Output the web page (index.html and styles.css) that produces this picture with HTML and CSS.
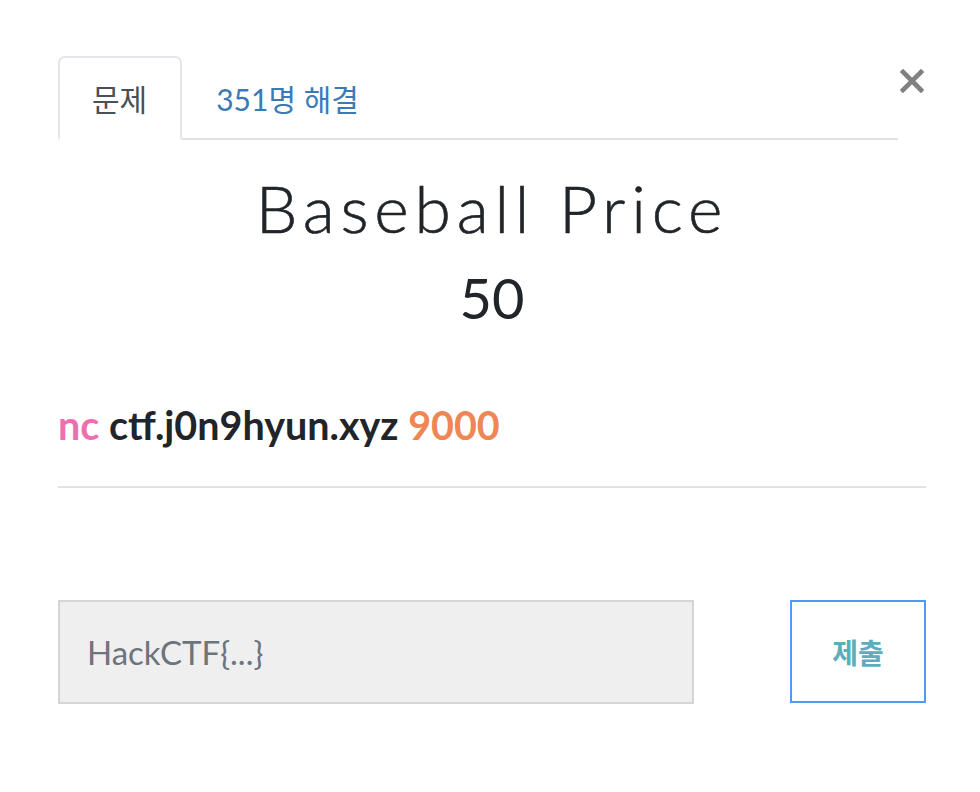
FILE: index.html
```html
<!DOCTYPE html>
<html lang="ko">
<head>
<meta charset="utf-8">
<title>Baseball Price</title>
<link rel="stylesheet" href="styles.css">
</head>
<body>
<div class="modal">
  <div class="header">
    <ul class="tabs">
      <li class="tab active">문제</li>
      <li class="tab link">351명 해결</li>
    </ul>
    <button class="close" aria-label="닫기">
      <svg width="24" height="24" viewBox="0 0 24 24"><path d="M3 3L21 21M21 3L3 21" stroke="#808080" stroke-width="4.6" stroke-linecap="square"/></svg>
    </button>
  </div>
  <h1 class="title">Baseball Price</h1>
  <div class="points">50</div>
  <p class="cmd"><span class="nc">nc</span> ctf.j0n9hyun.xyz <span class="port">9000</span></p>
  <hr class="rule">
  <form class="submit-row">
    <input class="flag" type="text" placeholder="HackCTF{...}">
    <button class="submit" type="button">제출</button>
  </form>
</div>
</body>
</html>
```

FILE: styles.css
```css
html, body {
  margin: 0;
  padding: 0;
  background: #ffffff;
}
body {
  font-family: Lato, "Noto Sans CJK KR", sans-serif;
  color: #212529;
}
.modal {
  padding: 56px 54px 0 58px;
}
.header {
  display: flex;
  align-items: flex-start;
}
.tabs {
  flex: 1;
  display: flex;
  list-style: none;
  margin: 0;
  padding: 0;
  border-bottom: 2px solid #dee2e6;
}
.tab {
  font-family: Lato, "Noto Sans CJK KR", sans-serif;
  font-size: 30px;
  line-height: 44px;
  padding: 19px 33px 17px 32px;
  margin-bottom: -2px;
  border: 2px solid transparent;
  border-radius: 7px 7px 0 0;
}
.tab.active {
  color: #495057;
  border-color: #e3e6ea #e3e6ea #ffffff;
  background: #ffffff;
}
.tab.link {
  color: #3c7ab7;
  padding-left: 32px;
}
.close {
  border: 0;
  background: none;
  padding: 0;
  margin: 11px 0 0 0;
  width: 28px;
  height: 28px;
  display: flex;
  align-items: center;
  justify-content: center;
}
.title {
  margin: 30px 0 0;
  text-align: center;
  font-family: Lato, sans-serif;
  font-weight: 300;
  font-size: 66px;
  letter-spacing: 5.8px;
  line-height: 76px;
  color: #212529;
  -webkit-text-stroke: 0.6px #212529;
}
.points {
  text-align: center;
  font-size: 56px;
  line-height: 80px;
  margin-top: 12px;
  color: #212529;
}
.cmd {
  margin: 59px 0 0;
  font-weight: 700;
  font-size: 39.5px;
  line-height: 56px;
  color: #212529;
}
.nc {
  color: #ef6fae;
}
.port {
  color: #ef8656;
}
.rule {
  margin: 33px 0 0;
  border: 0;
  border-top: 2px solid #e2e2e2;
}
.submit-row {
  display: flex;
  justify-content: space-between;
  margin-top: 112px;
}
.flag {
  box-sizing: border-box;
  width: 636px;
  height: 104px;
  background: #efefef;
  border: 2px solid #d3d6d9;
  padding: 0 27px;
  font-family: Lato, sans-serif;
  font-size: 33px;
  color: #495057;
  outline: none;
}
.flag::placeholder {
  color: #6c757d;
}
.submit {
  box-sizing: border-box;
  width: 136px;
  height: 103px;
  background: #ffffff;
  border: 2px solid #4d9bf7;
  font-family: "Noto Sans CJK KR", sans-serif;
  font-weight: 700;
  font-size: 28px;
  color: #5aaebf;
  padding: 0;
}
```
